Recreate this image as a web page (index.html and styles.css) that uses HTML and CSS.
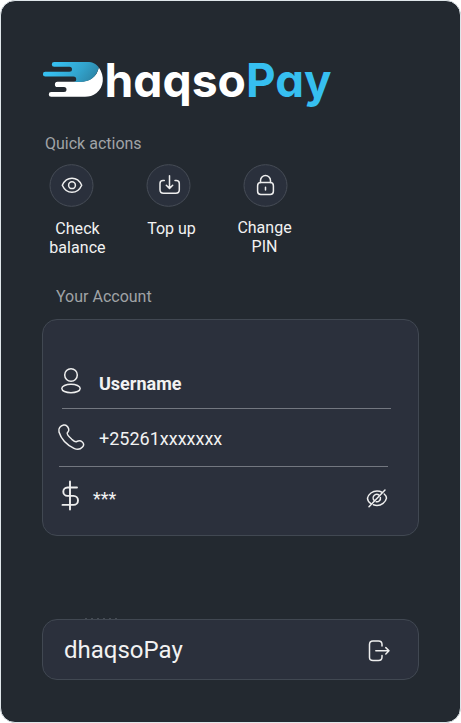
FILE: index.html
```html
<!DOCTYPE html>
<html lang="en">
<head>
<meta charset="utf-8">
<title>DhaqsoPay</title>
<link rel="stylesheet" href="styles.css">
</head>
<body>
<main class="screen">
  <header class="brand">
    <svg class="logo" width="300" height="66" viewBox="40 46 300 66">
      <defs>
        <linearGradient id="wing" x1="56" y1="64" x2="96" y2="96" gradientUnits="userSpaceOnUse">
          <stop offset="0" stop-color="#36bff0"/>
          <stop offset=".45" stop-color="#32a3cc"/>
          <stop offset="1" stop-color="#286f8b"/>
        </linearGradient>
      </defs>
      <path fill="#fff" d="M57.500 81.800H80C90 81.500 97 77 98.800 67.500C105 76 104 87 96.500 93C93 95.800 89 96.800 85 96.800H51.200a2.400 2.400 0 0 1 0-4.800H64a2.500 2.500 0 0 0 0-5H57.500a2.600 2.600 0 0 1 0-5.200Z"/>
      <path fill="url(#wing)" d="M54.200 62H87C93 62 96.500 64 98.800 67.500C96.500 77 90 82 80 82H73.500a2.700 2.700 0 0 0 0-5.400H45.300a2.400 2.400 0 0 1 0-4.800H69.500a2.500 2.500 0 0 0 0-5H54.200a2.400 2.400 0 0 1 0-4.800Z"/>
      <text class="wordmark" x="104.500" y="96.500" textLength="141.500" lengthAdjust="spacingAndGlyphs" fill="#fff">haqso</text>
      <text class="wordmark" x="246" y="96.500" textLength="85.500" lengthAdjust="spacingAndGlyphs" fill="#36bff0">Pay</text>
    </svg>
  </header>

  <section class="quick">
    <h2 class="heading">Quick actions</h2>
    <div class="actions">
      <div class="action">
        <svg width="44" height="43" viewBox="0 0 44 43"><ellipse class="disc" cx="21.500" cy="21.500" rx="21.500" ry="20.800"/><g class="stroke"><path d="M12.300 21.200C14.300 17 17.700 14.300 22 14.300S29.700 17 31.700 21.200C29.700 25.600 26.300 28.300 22 28.300S14.300 25.600 12.300 21.200Z"/><circle cx="22" cy="21.200" r="3.400"/></g></svg>
        <span>Check<br>balance</span>
      </div>
      <div class="action action-top">
        <svg width="44" height="43" viewBox="0 0 44 43"><ellipse class="disc" cx="21.500" cy="21.500" rx="21.500" ry="20.800"/><g class="stroke"><path d="M17.300 16.500H16q-3 0-3 3v6.300q0 3.500 3.500 3.500h12.300q3.500 0 3.500-3.500v-6.300q0-3-3-3H28M22.500 11.800V24M19.300 21.200l3.200 3.200 3.200-3.200"/></g></svg>
        <span>Top up</span>
      </div>
      <div class="action action-pin">
        <svg width="44" height="43" viewBox="0 0 44 43"><ellipse class="disc" cx="21.500" cy="21.500" rx="21.500" ry="20.800"/><g class="stroke"><rect x="13.600" y="18.500" width="15.800" height="12" rx="3.200"/><path d="M16.500 18.500V16.500a5 5 0 0 1 10 0v2M21.500 23.300v2.700"/></g></svg>
        <span>Change<br>PIN</span>
      </div>
    </div>
  </section>

  <section class="account">
    <h2 class="heading">Your Account</h2>
    <div class="card">
      <div class="row row-user">
        <svg class="stroke" width="28" height="30" viewBox="0 0 28 30"><circle cx="14" cy="9" r="6.300"/><ellipse cx="14" cy="22.500" rx="9.200" ry="4.200"/></svg>
        <strong>Username</strong>
      </div>
      <div class="row row-phone">
        <svg class="stroke" width="28" height="30" viewBox="0 0 28 30"><path d="M6.600 2C9 1.600 11 3.800 11.700 6C12.300 8 11 8.800 10.300 9.800C9.700 11 12 13.700 14.800 16.300C16.400 17.700 18 19.300 19.700 18.500C21.300 17.700 23 17 25 18.700C27 20.500 27.200 22.200 25.500 24C23.700 26 20.500 27 17 25.300C10 22 4 15.500 2 9C1 5.500 3.500 2.600 6.600 2Z"/></svg>
        <span>+25261xxxxxxx</span>
      </div>
      <div class="row row-balance">
        <svg class="stroke dollar" width="24" height="32" viewBox="0 0 24 32"><path d="M12 1.500v28M19 7.500H9.500a4.200 4.200 0 0 0 0 8.400h6a4.500 4.500 0 0 1 0 9H4.500"/></svg>
        <span>***</span>
        <svg class="stroke hidden-eye" width="24" height="22" viewBox="0 0 24 22"><path d="M5.600 16.300C3.700 15 2.500 12.800 2.500 11.200C3.500 7 7.500 4 12 4C13.800 4 15.500 4.400 16.800 5.200M19.200 7C20.600 8.200 21.500 10 21.500 11.200C20.500 15.500 16.500 18.500 12 18.500C10.700 18.500 9.500 18.200 8.400 17.800M9.300 13.600a3.600 3.600 0 0 1 4.900-5.300M15.400 10.600a3.600 3.600 0 0 1-4.200 4.200M20 3 4 19.700"/></svg>
      </div>
    </div>
  </section>

  <div class="card signout">
    <span>dhaqsoPay</span>
    <svg class="stroke" width="24" height="24" viewBox="0 0 24 24"><path d="M15 7V5.500q0-3.500-3.500-3.500H6Q2.500 2 2.500 5.500v13Q2.500 21.500 6 21.500h5.500q3.500 0 3.500-3.500V16.500M8.800 11.800H22M18.800 8.600 22 11.800l-3.200 3.200"/></svg>
  </div>
</main>
</body>
</html>
```
FILE: styles.css
```css
* { box-sizing: border-box; }
body { margin: 0; background: #fff; font-family: Roboto, "Liberation Sans", sans-serif; color: #f2f2f2; }
svg { display: block; flex: none; overflow: visible; }
.screen { width: 461px; height: 723px; padding: 45px 42px 0 41px; background: #232930; border: 1px solid #dfe6ea; border-radius: 15px; }
.logo { margin-left: -2px; }
.wordmark { font-family: Inter, sans-serif; font-weight: 650; font-size: 46.5px; font-feature-settings: "cv11"; }
.heading { margin: 0; font-weight: 400; font-size: 16px; line-height: 19px; color: #a0a3a6; }
.quick { padding: 22px 0 0 3px; }
.actions { display: flex; gap: 13px; margin: 11px 0 0 -16px; }
.action { width: 84px; display: flex; flex-direction: column; align-items: center; gap: 12px; font-size: 16px; line-height: 19px; text-align: center; }
.action svg { margin-left: 1.5px; }
.action span { margin-left: 13px; }
.action:first-child span { letter-spacing: .05px; }
.action-top span { margin-left: 7px; }
.action-pin span { margin: -1px 0 0 -1px; }
.disc { fill: #2a303c; stroke: #464c56; stroke-width: 1; }
.stroke { fill: none; stroke: #eee; stroke-width: 1.5; stroke-linecap: round; stroke-linejoin: round; }
.account { padding-top: 30px; }
.account .heading { margin-left: 14px; }
.card { width: 377px; background: #2b303c; border: 1px solid #414852; border-radius: 15px; }
.account .card { height: 217px; margin-top: 13px; padding: 31px 27px 0 14px; }
.row { display: flex; align-items: center; height: 58px; font-size: 18px; }
.row-user { margin-left: 5px; border-bottom: 1px solid #737780; }
.row-user svg { margin: 2px 0 0 -5px; }
.row-user strong { padding-top: 8px; }
.row-phone { margin: 0 3px 0 2px; border-bottom: 1px solid #737780; }
.row-phone svg { margin-left: -2px; }
.row-phone span { padding-top: 2px; }
.row span, .row strong { margin-left: 14px; }
.dollar { margin-left: 1px; stroke-width: 1.9; }
.row-balance span { margin-left: 11px; padding-top: 5px; }
.hidden-eye { margin: 3px 2px 0 auto; }
.signout { position: relative; height: 61px; margin-top: 83px; padding: 0 27px 0 21px; display: flex; align-items: center; justify-content: space-between; font-size: 24px; }
.signout svg { margin-top: 3px; }
.signout::before { content: ""; position: absolute; left: 42px; top: -2px; width: 33px; height: 1px; background: repeating-linear-gradient(90deg, #464c54 0 2px, transparent 2px 6px); }
```
